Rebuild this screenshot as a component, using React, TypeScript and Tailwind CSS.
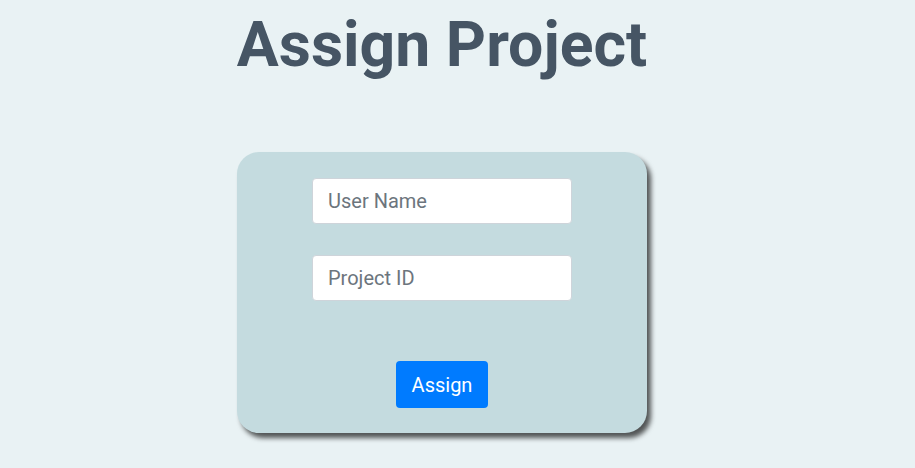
export default function App() {
  return (
    <div className="min-h-[468px] w-full bg-[#e9f2f4] font-['Roboto',sans-serif]">
      <div className="flex w-[884px] flex-col items-center">
        <h1 className="mt-[7px] text-[62.5px] font-bold leading-[1.2] text-[#465564]">
          Assign Project
        </h1>
        <form className="mt-[70px] flex h-[281px] w-[410px] flex-col items-center rounded-[22px] bg-[#c4dbdf] pt-[26px] shadow-[4px_5px_5px_rgba(0,0,0,0.65)]">
          <input
            type="text"
            placeholder="User Name"
            className="h-[46px] w-[260px] rounded-[4px] border border-[#ced4da] bg-white px-[15px] text-[20px] text-[#495057] outline-none placeholder:text-[#6c757d]"
          />
          <input
            type="text"
            placeholder="Project ID"
            className="mt-[31px] h-[46px] w-[260px] rounded-[4px] border border-[#ced4da] bg-white px-[15px] text-[20px] text-[#495057] outline-none placeholder:text-[#6c757d]"
          />
          <button
            type="button"
            className="mt-[60px] h-[47px] w-[92px] rounded-[4px] bg-[#007bff] text-[20px] text-white"
          >
            Assign
          </button>
        </form>
      </div>
    </div>
  )
}
